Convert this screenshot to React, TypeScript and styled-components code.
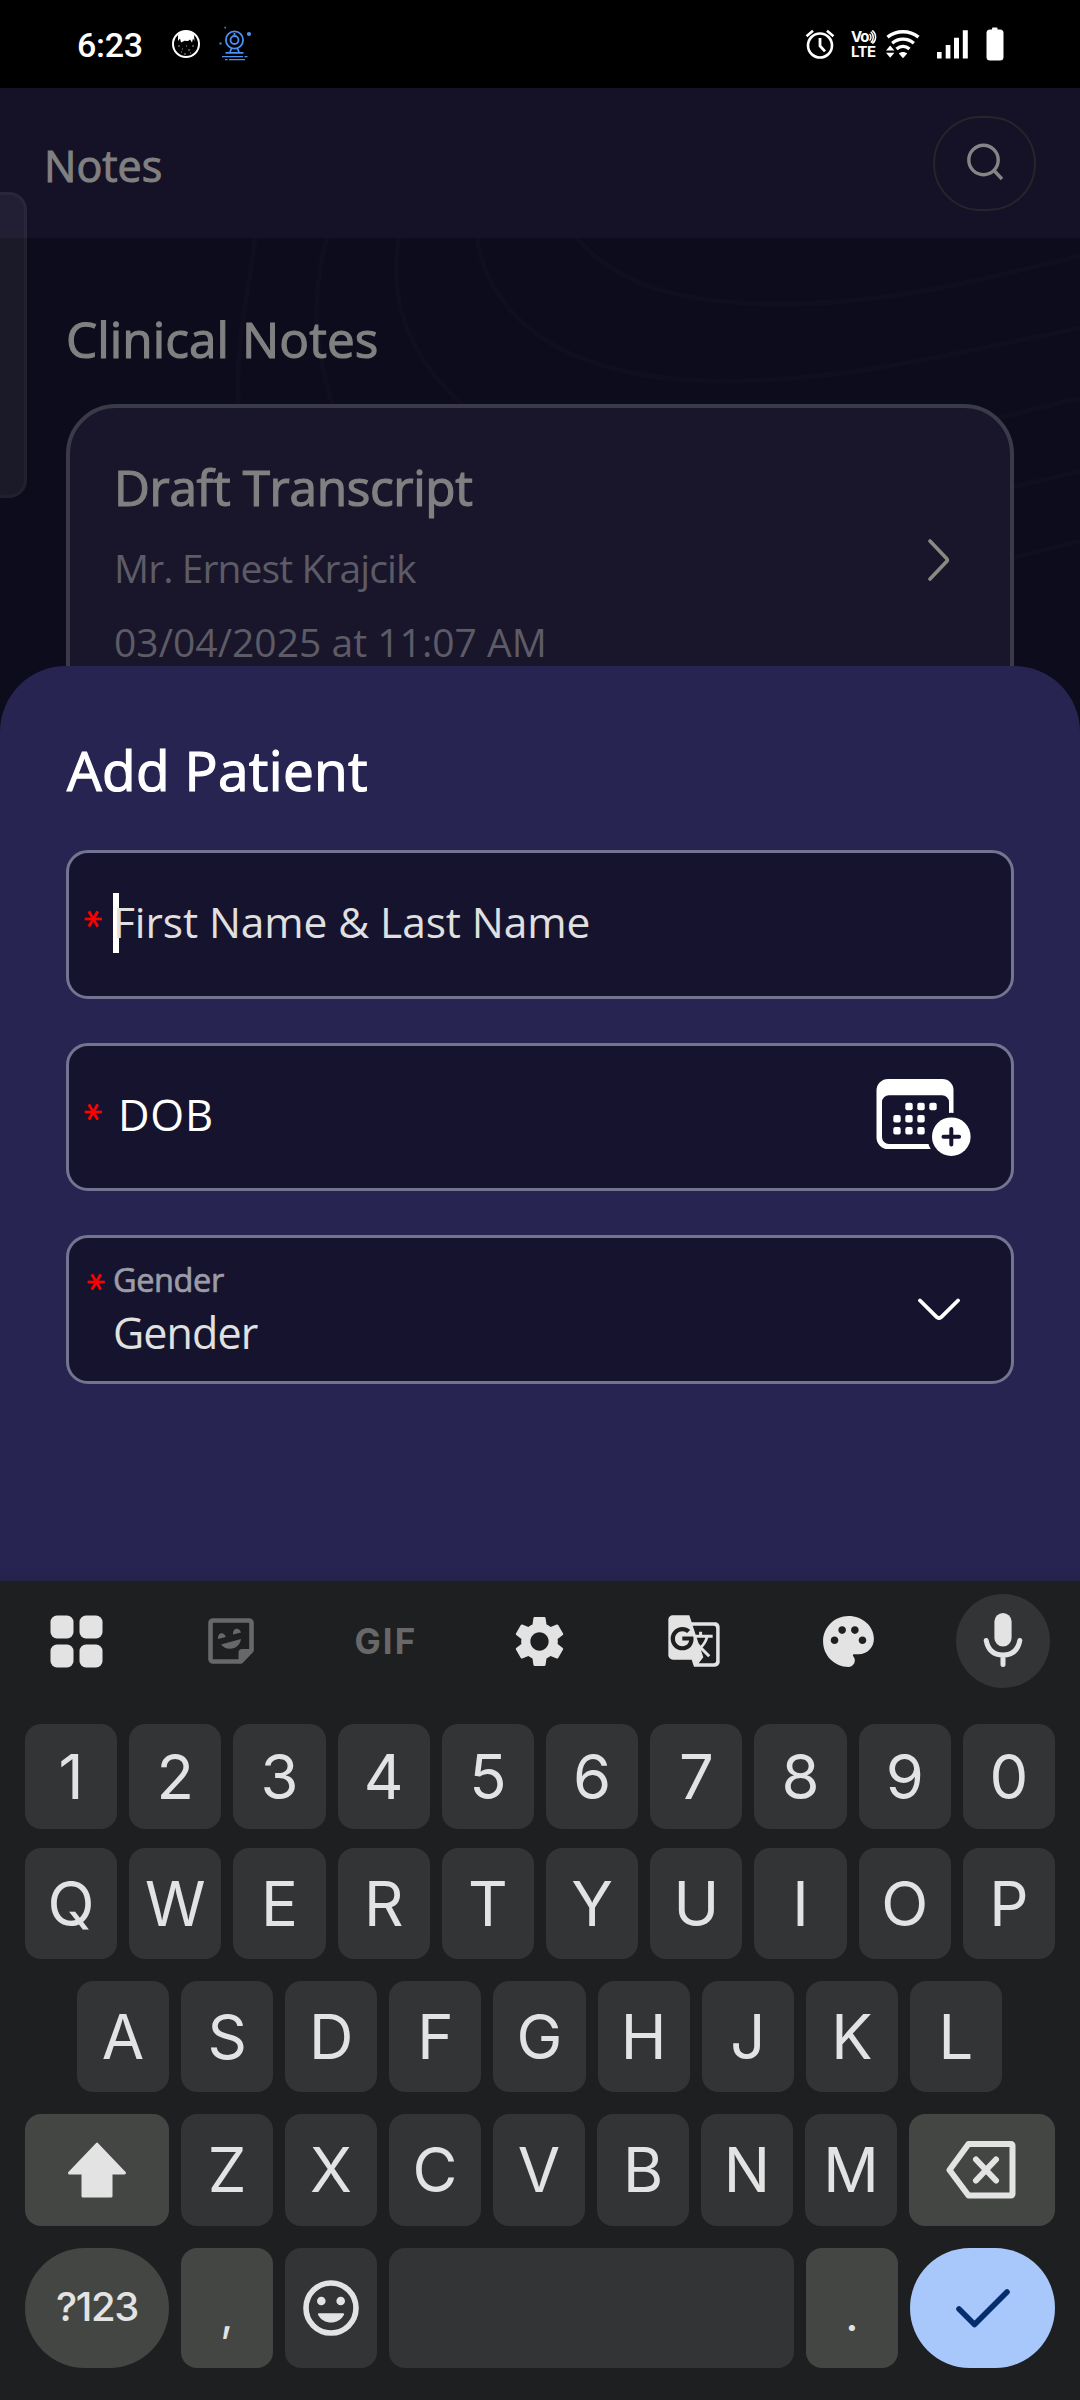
import React from 'react';
import styled, { createGlobalStyle } from 'styled-components';
import { MdGTranslate, MdPalette, MdSettings } from 'react-icons/md';

const GlobalStyle = createGlobalStyle`
  * { box-sizing: border-box; }
  body { margin: 0; background: #000; }
`;

const APP_FONT = '"Open Sans", "Noto Sans", sans-serif';
const KEY_FONT = 'Inter, Roboto, sans-serif';

const Screen = styled.div`
  width: 1080px;
  height: 2400px;
  display: flex;
  flex-direction: column;
  position: relative;
  overflow: hidden;
  background: #0d0c1c;
  font-family: ${APP_FONT};
`;

/* ---------- status bar ---------- */

const StatusBar = styled.div`
  height: 88px;
  flex: none;
  display: flex;
  justify-content: space-between;
  background: #000;
  padding: 0 76px 0 77px;
  color: #fff;
`;

const StatusGroup = styled.div<{ $gap: number }>`
  display: flex;
  align-items: center;
  gap: ${(p) => p.$gap}px;
`;

const Clock = styled.span`
  font: 500 34px/40px Roboto, sans-serif;
  width: 66px;
  padding-top: 2px;
  letter-spacing: -0.3px;
  margin-right: 10px;
`;

const VolteBadge = styled.div`
  width: 27px;
  height: 30px;
  display: flex;
  flex-direction: column;
  font: 700 15px/15px Inter, sans-serif;
  margin: 0 8px 0 16px;
`;

const VolteTop = styled.div`
  display: flex;
  align-items: center;
  height: 15px;
  letter-spacing: -1px;
`;

const VolteBottom = styled.div`
  height: 15px;
  letter-spacing: -0.6px;
`;

/* ---------- notes page ---------- */

const Header = styled.div`
  height: 150px;
  flex: none;
  display: flex;
  align-items: center;
  justify-content: space-between;
  padding: 0 44px;
  background: #151228;
`;

const HeaderTitle = styled.h1`
  margin: 5px 0 0;
  font-size: 43px;
  font-weight: 400;
  line-height: 60px;
  letter-spacing: 0;
  color: #808080;
  -webkit-text-stroke: 1px #808080;
`;

const SearchButton = styled.div`
  width: 103px;
  height: 95px;
  border: 2px solid #23262a;
  border-radius: 48px;
  display: flex;
  align-items: center;
  justify-content: center;
`;

const NotesPage = styled.div`
  height: 494px;
  flex: none;
  position: relative;
  overflow: hidden;
  padding: 71px 66px 0;
`;

const Contours = styled.svg`
  position: absolute;
  left: 0;
  top: 0;
`;

const SectionTitle = styled.h2`
  position: relative;
  margin: 0 0 35px;
  font-size: 49.5px;
  line-height: 60px;
  font-weight: 400;
  letter-spacing: 0.05px;
  color: #808080;
  -webkit-text-stroke: 1.1px #808080;
`;

const NoteCard = styled.div`
  position: relative;
  height: 420px;
  border: 4px solid #3b3a48;
  border-radius: 50px;
  background: #19162b;
  padding: 49px 60px 0 44px;
  display: flex;
  justify-content: space-between;
`;

const NoteTitle = styled.div`
  font-size: 49.5px;
  line-height: 60px;
  font-weight: 400;
  letter-spacing: -0.35px;
  color: #808080;
  -webkit-text-stroke: 1.2px #808080;
  margin-bottom: 24px;
`;

const NoteMeta = styled.div<{ $spacing: number }>`
  font-size: 39px;
  line-height: 54px;
  color: #5c5b66;
  margin-bottom: 20px;
  letter-spacing: ${(p) => p.$spacing}px;
  white-space: nowrap;
`;

const NoteChevron = styled.div`
  padding-top: 81px;
`;

const EdgeHandle = styled.div`
  position: absolute;
  left: 0;
  top: 192px;
  width: 27px;
  height: 306px;
  border: 3px solid rgba(255, 255, 255, 0.03);
  border-left: 0;
  border-radius: 0 18px 18px 0;
  background: rgba(255, 255, 255, 0.06);
`;

/* ---------- add patient sheet ---------- */

const Sheet = styled.div`
  height: 915px;
  flex: none;
  margin-top: -66px;
  position: relative;
  border-radius: 66px 66px 0 0;
  background: #272451;
  padding: 69px 66px 0;
`;

const SheetTitle = styled.h2`
  margin: 0 0 45px;
  padding-left: 1px;
  font-size: 55px;
  line-height: 70px;
  font-weight: 400;
  color: #fff;
  letter-spacing: 0.3px;
  -webkit-text-stroke: 1.2px #fff;
`;

const Fields = styled.div`
  display: flex;
  flex-direction: column;
  gap: 44px;
`;

const Field = styled.div<{ $height: number; $right?: number }>`
  height: ${(p) => p.$height}px;
  border: 3px solid #747491;
  border-radius: 22px;
  background: #15132d;
  display: flex;
  align-items: center;
  padding: 0 ${(p) => p.$right ?? 0}px 0 9px;
`;

const Required = styled.span<{ $lift: number; $left?: number }>`
  width: 18px;
  height: 18px;
  flex: none;
  margin: 0 0 ${(p) => p.$lift}px ${(p) => p.$left ?? 0}px;
  font: 400 35px/18px "DejaVu Sans", sans-serif;
  color: #ff0000;
  -webkit-text-stroke: 0.7px #ff0000;
  text-align: center;
  transform: rotate(90deg);
`;

const InputText = styled.div`
  position: relative;
  flex: 1;
  height: 60px;
  margin: 0 0 3px 17px;
`;

const Caret = styled.div`
  position: absolute;
  left: 0;
  top: 0;
  width: 6px;
  height: 60px;
  background: #fff;
`;

const Placeholder = styled.div`
  position: relative;
  padding-top: 1px;
  font-size: 42.5px;
  line-height: 56px;
  letter-spacing: -0.1px;
  color: #e0e0e0;
  white-space: nowrap;
`;

const FieldLabel = styled.div`
  flex: 1;
  margin: 0 0 4px 22px;
  font-size: 43.5px;
  line-height: 60px;
  letter-spacing: 0.8px;
  color: #fff;
`;

const CalendarSlot = styled.div`
  display: flex;
  padding-top: 2px;
`;

const SelectText = styled.div`
  flex: 1;
  align-self: flex-start;
  margin: 20px 0 0 14px;
`;

const SelectLabel = styled.div`
  font-size: 32.5px;
  line-height: 44px;
  font-weight: 400;
  letter-spacing: -0.4px;
  color: #9c9ba6;
  -webkit-text-stroke: 0.7px #9c9ba6;
  margin-bottom: 3px;
`;

const SelectValue = styled.div`
  font-size: 43px;
  line-height: 56px;
  letter-spacing: -0.9px;
  color: #e0e2e0;
`;

/* ---------- keyboard ---------- */

const Keyboard = styled.div`
  flex: 1;
  position: relative;
  background: #1e1f21;
  font-family: ${KEY_FONT};
  color: #e3e3e3;
  box-shadow: 0 -2px 10px rgba(30, 31, 33, 0.3);
`;

const Toolbar = styled.div`
  height: 143px;
  padding: 13px 30px 0 29px;
  display: flex;
  align-items: flex-start;
  justify-content: space-between;
`;

const Tool = styled.div<{ $filled?: boolean; $dim?: boolean }>`
  width: 94px;
  height: 94px;
  border-radius: 50%;
  display: flex;
  align-items: center;
  justify-content: center;
  background: ${(p) => (p.$filled ? '#333436' : 'transparent')};
  color: ${(p) => (p.$dim ? '#686868' : '#e3e3e3')};
`;

const GifLabel = styled.span`
  font: 700 35px/40px Inter, sans-serif;
  letter-spacing: 2.2px;
  padding-left: 2px;
`;

const KeyRow = styled.div<{ $height: number; $gap: number; $inset?: boolean }>`
  height: ${(p) => p.$height}px;
  margin-bottom: ${(p) => p.$gap}px;
  padding: 0 ${(p) => (p.$inset ? 78 : 25)}px 0 ${(p) => (p.$inset ? 77 : 25)}px;
  display: flex;
  gap: 12px;
`;

const Key = styled.div<{ $width?: number; $tone?: 'special' | 'action'; $pill?: boolean }>`
  flex: ${(p) => (p.$width ? `0 0 ${p.$width}px` : '1 1 0')};
  min-width: 0;
  border-radius: ${(p) => (p.$pill ? 60 : 16)}px;
  background: ${(p) =>
    p.$tone === 'action' ? '#a8c7fa' : p.$tone === 'special' ? '#444644' : '#333436'};
  display: flex;
  align-items: center;
  justify-content: center;
  font-size: 61.5px;
  line-height: 1;
`;

const ModeLabel = styled.span`
  font-size: 40px;
  font-weight: 500;
  letter-spacing: -1.3px;
  padding-bottom: 3px;
`;

const Punctuation = styled.span`
  font-size: 46px;
  padding-top: 12px;
`;

/* ---------- icons ---------- */

const CatIcon = () => (
  <svg width="30" height="30" viewBox="0 0 30 30">
    <circle cx="15" cy="15" r="13" fill="#000" stroke="#fff" strokeWidth="2" />
    <path
      d="M7 6 C9 3 12 1.8 15 1.8 C18 1.8 21 3 23 6 L23.500 12 L22 9.500 L21 13.500 L19 10.500 L17 12 L13.500 11.800 L11 13 L10 13.500 L9 9.500 L7 12 Z"
      fill="#fff"
    />
    <path
      d="M7 17h2M11 20h1M17 21h2M21 17h2M13 25h2M19 24h1M10 23h1M15 17h1"
      stroke="#999"
      strokeWidth="1.1"
    />
  </svg>
);

const WebcamIcon = () => (
  <svg width="34" height="36" viewBox="0 0 34 36" fill="none" stroke="#4a90f5" strokeWidth="1.8">
    <circle cx="15.500" cy="14" r="8.6" />
    <circle cx="15.500" cy="14" r="4" />
    <path d="M15.500 7v2M12.500 22.500l-1.500 3.500M18.500 22.500l1.500 3.500M6.500 26.800h18" />
    <path d="M3 30.600h21M25.500 30.600h3M6 33.600h2.500M10 33.600h16" strokeWidth="1.4" />
    <circle cx="30" cy="8" r="1.2" fill="#4a90f5" />
    <path d="M0.500 17.500h2M5.500 1.600h1.400" />
  </svg>
);

const AlarmIcon = () => (
  <svg width="30" height="32" viewBox="0 0 30 32" fill="none" stroke="#fff" strokeWidth="2.6">
    <circle cx="15" cy="17.5" r="12" />
    <path d="M15 10v8l5 5.4" strokeWidth="2.8" />
    <path d="M1.5 8.2l6.5-5.4M28.5 8.2l-6.5-5.4" />
  </svg>
);

const VoWaves = () => (
  <svg width="9" height="14" viewBox="0 0 9 14" fill="none" stroke="#fff" strokeWidth="1.5">
    <path d="M1.500 4c2 2 2 4.500 0 6.500M2.800 1.800c3.400 3 3.400 8 0 10.800M4.300 0.400c4.400 3.800 4.400 9.800 0 13.200" />
  </svg>
);

const WifiIcon = () => (
  <svg width="34" height="30" viewBox="0 0 34 30" fill="none" stroke="#fff" strokeWidth="3.4">
    <path d="M1.5 8.2C10.5 1 23.500 1 32.500 8.200" />
    <path d="M6.200 14.200C12.500 8.800 21.500 8.800 27.800 14.200" />
    <path d="M10.500 20C14.500 16.500 19.500 16.500 23.500 20" />
    <path d="M17 29.200l-4.200-4.600c2.400-2 6-2 8.400 0z" fill="#fff" stroke="none" />
    <path d="M4.200 16.500l4.200 5H0zM4.200 28.800l4.200-5H0z" fill="#fff" stroke="none" />
  </svg>
);

const SignalIcon = () => (
  <svg width="32" height="30" viewBox="0 0 32 30" fill="#fff">
    <path d="M0 23h4.600v6.500H0zM8.700 16h4.700v13.500H8.700zM17 8.700h5v20.800h-5zM25.800 1.300h5v28.200h-5z" />
  </svg>
);

const BatteryIcon = () => (
  <svg width="18" height="34" viewBox="0 0 18 34" fill="#fff">
    <rect x="6" y="0.500" width="5.500" height="5" rx="1" />
    <rect x="0.500" y="2.500" width="17" height="31" rx="3.500" />
  </svg>
);

const SearchIcon = () => (
  <svg width="40" height="40" viewBox="0 0 40 40" fill="none" stroke="#858585" strokeWidth="3.400">
    <circle cx="18.500" cy="17" r="14.700" />
    <path d="M28.500 27l8.500 9" />
  </svg>
);

const ChevronRight = () => (
  <svg width="24" height="44" viewBox="0 0 24 44" fill="none" stroke="#8a8984" strokeWidth="3.600" strokeLinecap="round" strokeLinejoin="round">
    <path d="M4 3l16.600 17.400q1.500 1.600 0 3.200L4 41" />
  </svg>
);

const ChevronDown = () => (
  <svg width="42" height="24" viewBox="0 0 42 24" fill="none" stroke="#fff" strokeWidth="3.800" strokeLinecap="round" strokeLinejoin="round">
    <path d="M2 2.500l17 16.800q2 1.500 4 0L40 2.500" />
  </svg>
);

const CalendarAddIcon = () => {
  const dots = [
    [33, 27.5], [45, 27.5], [57, 27.5],
    [21, 39.7], [33, 39.7], [45, 39.7],
    [21, 51.7], [33, 51.7],
  ];
  return (
    <svg width="96" height="78" viewBox="0 0 96 78">
      <path
        fillRule="evenodd"
        fill="#fff"
        d="M12 0H66.500a11 11 0 0 1 11 11V59a11 11 0 0 1-11 11H12a11.500 11.500 0 0 1-11.500-11.500V11.500A11.500 11.500 0 0 1 12 0ZM13 16.300a7 7 0 0 0-7 7V58a7 7 0 0 0 7 7H66a7 7 0 0 0 7-7V23.300a7 7 0 0 0-7-7Z"
      />
      {dots.map(([x, y]) => (
        <rect key={`${x}-${y}`} x={x - 3.7} y={y - 3.7} width="7.4" height="7.4" rx="2" fill="#fff" />
      ))}
      <circle cx="75.3" cy="57.7" r="24" fill="#15132d" />
      <rect x="41.3" y="48" width="7.4" height="7.4" rx="2" fill="#fff" />
      <circle cx="75.3" cy="57.7" r="19.3" fill="#fff" />
      <path d="M75.3 49.9v15.6M67.5 57.7h15.6" stroke="#15132d" strokeWidth="4" strokeLinecap="round" />
    </svg>
  );
};

const GridIcon = () => (
  <svg width="53" height="53" viewBox="0 0 53 53" fill="currentColor">
    <rect x="0.5" y="0.5" width="23" height="23" rx="6.5" />
    <rect x="29.5" y="0.5" width="23" height="23" rx="6.5" />
    <rect x="0.5" y="29.5" width="23" height="23" rx="6.5" />
    <rect x="29.5" y="29.5" width="23" height="23" rx="6.5" />
  </svg>
);

const StickerIcon = () => (
  <svg width="46" height="46" viewBox="0 0 46 46">
    <path
      d="M5 2.500H41a2.500 2.500 0 0 1 2.500 2.500V32.500L33 43.500H5A2.500 2.500 0 0 1 2.500 41V5A2.500 2.500 0 0 1 5 2.500Z"
      fill="none"
      stroke="currentColor"
      strokeWidth="4.6"
      strokeLinejoin="round"
    />
    <path d="M44 31H34a3.500 3.500 0 0 0-3.500 3.500V44Z" fill="currentColor" />
    <path d="M10 21c-.6-7.200 6.500-7.600 7.800-2zM25 16.600c-.4-7.200 6.600-7.600 8-2z" fill="currentColor" />
    <path d="M13 26.500L33 21c-1.500 11-15 12.500-20 5.500z" fill="currentColor" />
  </svg>
);

const MicIcon = () => (
  <svg width="40" height="56" viewBox="0 0 40 56">
    <rect x="11.4" y="0" width="17.2" height="33.5" rx="8.6" fill="currentColor" />
    <path
      d="M3.200 27.500C5 37 11 42 20 42S35 37 36.800 27.500M20 42V51.500"
      fill="none"
      stroke="currentColor"
      strokeWidth="5"
      strokeLinecap="round"
    />
  </svg>
);

const ShiftIcon = () => (
  <svg width="60" height="58" viewBox="0 0 60 58" fill="#e3e3e3" stroke="#e3e3e3" strokeWidth="3" strokeLinejoin="round">
    <path d="M30 3.200L57.500 32H44V55H16V32H2.500Z" />
  </svg>
);

const BackspaceIcon = () => (
  <svg width="72" height="60" viewBox="0 0 72 60" fill="none" stroke="#e3e3e3" strokeWidth="6" strokeLinejoin="round" strokeLinecap="round">
    <path d="M22.500 4H65a1.500 1.500 0 0 1 1.500 1.500V54a1.500 1.500 0 0 1-1.500 1.500H22.500L3.500 30Z" />
    <path d="M30 19.500l20 21M50 19.500l-20 21" />
  </svg>
);

const EmojiIcon = () => (
  <svg width="58" height="58" viewBox="0 0 58 58">
    <circle cx="29" cy="29" r="25" fill="none" stroke="#e3e3e3" strokeWidth="5.6" />
    <circle cx="19.3" cy="22" r="4.3" fill="#e3e3e3" />
    <circle cx="38.7" cy="22" r="4.3" fill="#e3e3e3" />
    <path d="M17 34.300h24q1.800 0 1 1.500c-5.500 10.400-20.500 10.400-26 0q-.8-1.500 1-1.500z" fill="#e3e3e3" />
  </svg>
);

const CheckIcon = () => (
  <svg width="56" height="40" viewBox="0 0 56 40" fill="none" stroke="#062e6f" strokeWidth="5.6" strokeLinecap="round" strokeLinejoin="round">
    <path d="M4 21L19.500 36.500L52 4" />
  </svg>
);

/* ---------- page ---------- */

const letters = (row: string) => row.split('').map((c) => <Key key={c}>{c}</Key>);

export default function App() {
  return (
    <Screen>
      <GlobalStyle />
      <StatusBar>
        <StatusGroup $gap={18}>
          <Clock>6:23</Clock>
          <CatIcon />
          <WebcamIcon />
        </StatusGroup>
        <StatusGroup $gap={0}>
          <AlarmIcon />
          <VolteBadge>
            <VolteTop>
              Vo
              <VoWaves />
            </VolteTop>
            <VolteBottom>LTE</VolteBottom>
          </VolteBadge>
          <StatusGroup $gap={17}>
            <WifiIcon />
            <SignalIcon />
            <BatteryIcon />
          </StatusGroup>
        </StatusGroup>
      </StatusBar>

      <Header>
        <HeaderTitle>Notes</HeaderTitle>
        <SearchButton>
          <SearchIcon />
        </SearchButton>
      </Header>

      <NotesPage>
        <Contours width="1080" height="494" viewBox="0 238 1080 494" fill="none" stroke="#110f1f" strokeWidth="5">
          <path d="M255 238C250 290 234 340 239 410" />
          <path d="M327 238C310 300 315 350 334 410" />
          <path d="M399 238C390 290 400 350 466 408" />
          <path d="M477 238C484 290 530 381 723 381C850 381 960 352 1080 328" />
          <path d="M577 238C605 270 650 304 780 304C890 304 980 280 1080 256" />
          <path d="M990 420L1080 398M1005 489L1080 471M1005 560L1080 541" />
        </Contours>
        <SectionTitle>Clinical Notes</SectionTitle>
        <NoteCard>
          <div>
            <NoteTitle>Draft Transcript</NoteTitle>
            <NoteMeta $spacing={-0.9}>Mr. Ernest Krajcik</NoteMeta>
            <NoteMeta $spacing={0.03}>03/04/2025 at 11:07 AM</NoteMeta>
          </div>
          <NoteChevron>
            <ChevronRight />
          </NoteChevron>
        </NoteCard>
      </NotesPage>

      <Sheet>
        <SheetTitle>Add Patient</SheetTitle>
        <Fields>
          <Field $height={149}>
            <Required $lift={12}>*</Required>
            <InputText>
              <Caret />
              <Placeholder>First Name &amp; Last Name</Placeholder>
            </InputText>
          </Field>
          <Field $height={148} $right={39}>
            <Required $lift={11}>*</Required>
            <FieldLabel>DOB</FieldLabel>
            <CalendarSlot>
              <CalendarAddIcon />
            </CalendarSlot>
          </Field>
          <Field $height={149} $right={51}>
            <Required $lift={56} $left={3}>*</Required>
            <SelectText>
              <SelectLabel>Gender</SelectLabel>
              <SelectValue>Gender</SelectValue>
            </SelectText>
            <ChevronDown />
          </Field>
        </Fields>
      </Sheet>

      <Keyboard>
        <Toolbar>
          <Tool><GridIcon /></Tool>
          <Tool $dim><StickerIcon /></Tool>
          <Tool $dim><GifLabel>GIF</GifLabel></Tool>
          <Tool><MdSettings size={61} /></Tool>
          <Tool><MdGTranslate size={56} /></Tool>
          <Tool><MdPalette size={61} /></Tool>
          <Tool $filled><MicIcon /></Tool>
        </Toolbar>
        <KeyRow $height={105} $gap={19}>{letters('1234567890')}</KeyRow>
        <KeyRow $height={111} $gap={22}>{letters('QWERTYUIOP')}</KeyRow>
        <KeyRow $height={111} $gap={22} $inset>{letters('ASDFGHJKL')}</KeyRow>
        <KeyRow $height={112} $gap={22}>
          <Key $width={144} $tone="special"><ShiftIcon /></Key>
          {letters('ZXCVBNM')}
          <Key $width={146} $tone="special"><BackspaceIcon /></Key>
        </KeyRow>
        <KeyRow $height={120} $gap={0}>
          <Key $width={144} $tone="special" $pill><ModeLabel>?123</ModeLabel></Key>
          <Key $width={92} $tone="special"><Punctuation>,</Punctuation></Key>
          <Key $width={92}><EmojiIcon /></Key>
          <Key />
          <Key $width={92} $tone="special"><Punctuation>.</Punctuation></Key>
          <Key $width={145} $tone="action" $pill><CheckIcon /></Key>
        </KeyRow>
      </Keyboard>

      <EdgeHandle />
    </Screen>
  );
}
